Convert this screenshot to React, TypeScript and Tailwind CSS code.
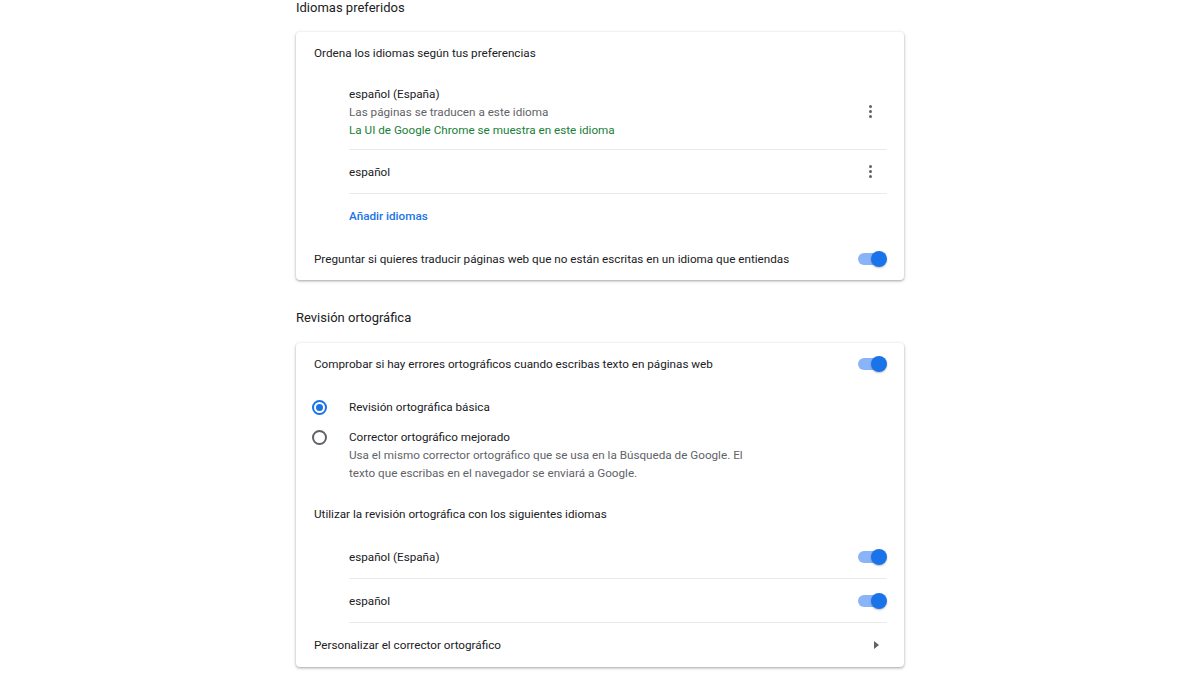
import type { ReactNode } from "react";

function Toggle() {
  return (
    <div className="relative h-[16px] w-[29px] shrink-0">
      <div className="absolute left-0 top-[2px] h-[12px] w-[26px] rounded-full bg-[#8ab4f8]" />
      <div className="absolute right-0 top-0 h-[16px] w-[16px] rounded-full bg-[#1a73e8] shadow-[0_1px_2px_rgba(0,0,0,0.25)]" />
    </div>
  );
}

function Kebab() {
  return (
    <div className="flex h-[20px] w-[20px] flex-col items-center justify-center gap-[2px]">
      <span className="h-[3px] w-[3px] rounded-full bg-[#5f6368]" />
      <span className="h-[3px] w-[3px] rounded-full bg-[#5f6368]" />
      <span className="h-[3px] w-[3px] rounded-full bg-[#5f6368]" />
    </div>
  );
}

function Radio({ checked }: { checked?: boolean }) {
  return (
    <div
      className={
        checked
          ? "flex h-[15px] w-[15px] items-center justify-center rounded-full border-2 border-[#1a73e8]"
          : "h-[15px] w-[15px] rounded-full border-2 border-[#5f6368]"
      }
    >
      {checked && <span className="h-[7px] w-[7px] rounded-full bg-[#1a73e8]" />}
    </div>
  );
}

function Card({ children }: { children: ReactNode }) {
  return (
    <div className="rounded-[4px] bg-white pl-[18px] pr-[17px] shadow-[0_1px_2px_rgba(60,64,67,0.3),0_1px_3px_1px_rgba(60,64,67,0.15)]">
      {children}
    </div>
  );
}

function Heading({ children }: { children: ReactNode }) {
  return <h2 className="h-[16px] text-[13px] leading-[16px] text-[#202124]">{children}</h2>;
}

export default function App() {
  return (
    <div
      className="min-h-[675px] w-full bg-white text-[11.7px] leading-[18px] text-[#202124]"
      style={{ fontFamily: "Roboto, 'Noto Sans', Arial, sans-serif" }}
    >
      <div className="mx-auto w-[608px]">
        {/* Idiomas preferidos */}
        <Heading>Idiomas preferidos</Heading>
        <div className="mt-[16px]">
          <Card>
            <div className="flex h-[42px] items-center">Ordena los idiomas según tus preferencias</div>

            <div className="ml-[35px]">
              <div className="flex h-[76px] items-center border-b border-[#e8eaed]">
                <div className="flex-1">
                  <div>español (España)</div>
                  <div className="text-[#5f6368]">Las páginas se traducen a este idioma</div>
                  <div className="text-[#188038]">La UI de Google Chrome se muestra en este idioma</div>
                </div>
                <div className="mr-[7px]">
                  <Kebab />
                </div>
              </div>
              <div className="flex h-[44px] items-center border-b border-[#e8eaed]">
                <div className="flex-1">español</div>
                <div className="mr-[7px]">
                  <Kebab />
                </div>
              </div>
              <div className="flex h-[44px] items-center font-medium text-[#1a73e8]">Añadir idiomas</div>
            </div>

            <div className="flex h-[42px] items-center justify-between">
              <span>Preguntar si quieres traducir páginas web que no están escritas en un idioma que entiendas</span>
              <Toggle />
            </div>
          </Card>
        </div>

        {/* Revisión ortográfica */}
        <div className="mt-[30px]">
          <Heading>Revisión ortográfica</Heading>
        </div>
        <div className="mt-[17px]">
          <Card>
            <div className="flex h-[42px] items-center justify-between">
              <span>Comprobar si hay errores ortográficos cuando escribas texto en páginas web</span>
              <Toggle />
            </div>

            <div className="flex flex-col gap-[12px] pb-[11px] pt-[13px]">
              <div className="flex items-start">
                <div className="flex h-[18px] w-[35px] items-center">
                  <div className="-ml-[2px]">
                    <Radio checked />
                  </div>
                </div>
                <span>Revisión ortográfica básica</span>
              </div>
              <div className="flex items-start">
                <div className="flex h-[18px] w-[35px] items-center">
                  <div className="-ml-[2px]">
                    <Radio />
                  </div>
                </div>
                <div>
                  <div>Corrector ortográfico mejorado</div>
                  <div className="w-[400px] text-[#5f6368]">
                    Usa el mismo corrector ortográfico que se usa en la Búsqueda de Google. El texto que escribas en el navegador se enviará a Google.
                  </div>
                </div>
              </div>
            </div>

            <div className="flex h-[42px] items-center">Utilizar la revisión ortográfica con los siguientes idiomas</div>

            <div className="ml-[35px]">
              <div className="flex h-[44px] items-center justify-between border-b border-[#e8eaed]">
                <span>español (España)</span>
                <Toggle />
              </div>
              <div className="flex h-[44px] items-center justify-between border-b border-[#e8eaed]">
                <span>español</span>
                <Toggle />
              </div>
            </div>

            <div className="flex h-[44px] items-center justify-between">
              <span>Personalizar el corrector ortográfico</span>
              <div className="mr-[8px] h-0 w-0 border-y-[4px] border-l-[5px] border-y-transparent border-l-[#5f6368]" />
            </div>
          </Card>
        </div>
      </div>
    </div>
  );
}
